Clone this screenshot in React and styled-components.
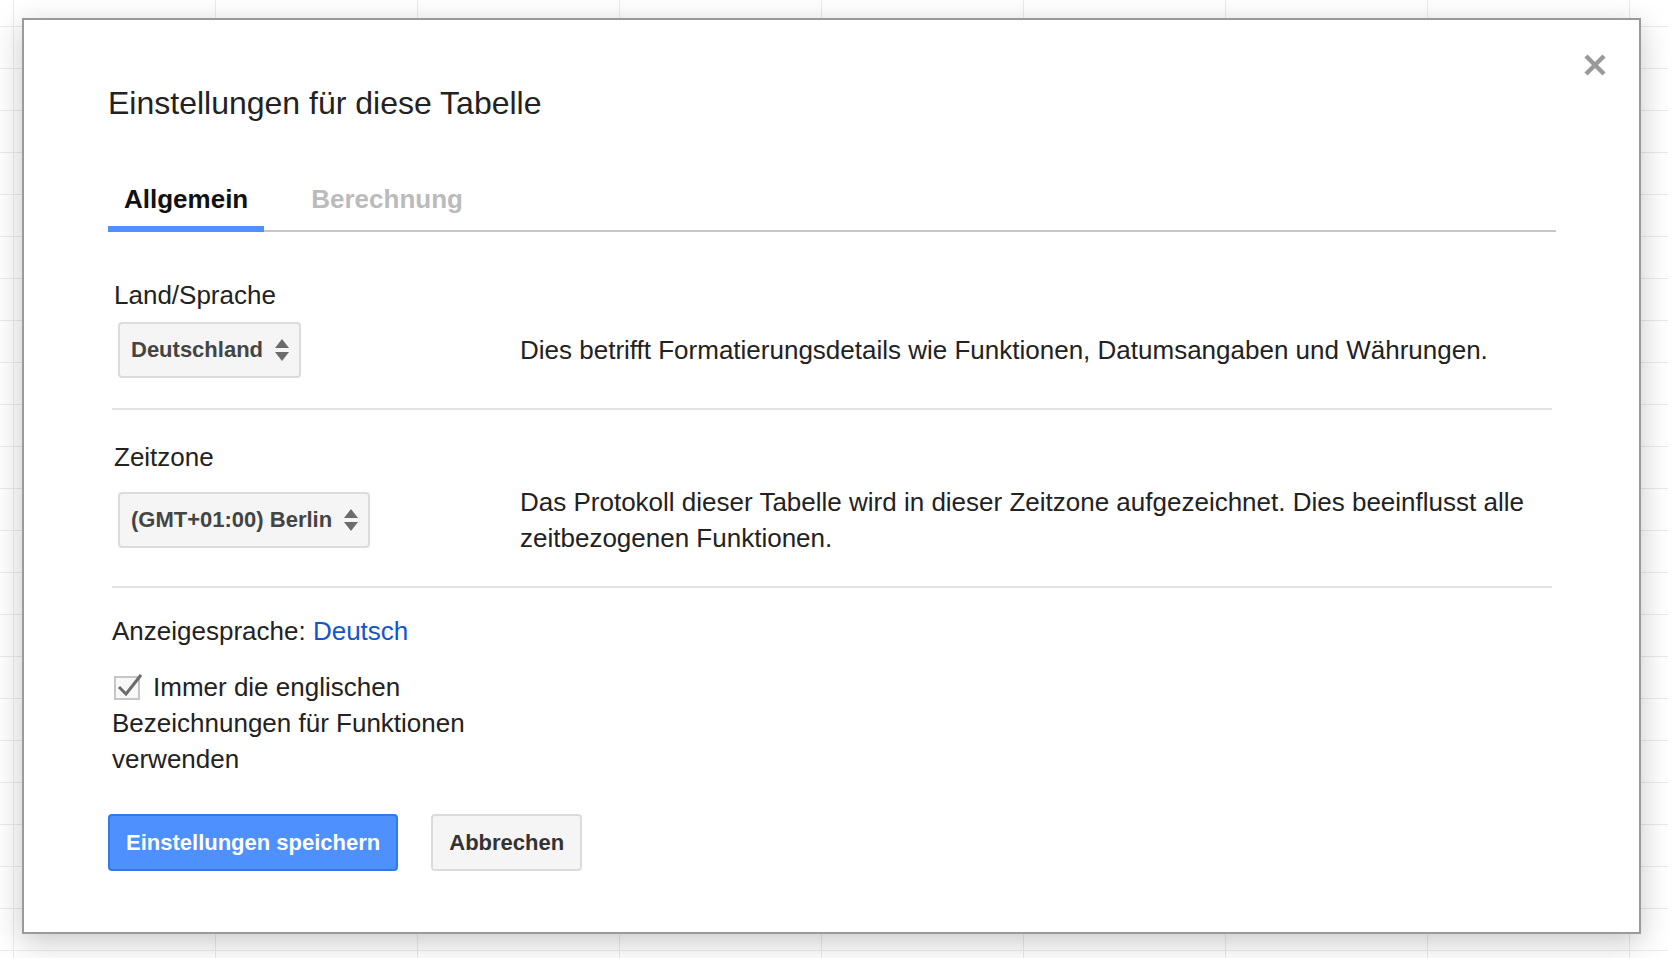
import React, { useState } from 'react';
import styled, { createGlobalStyle } from 'styled-components';

const GlobalStyle = createGlobalStyle`
  html, body {
    margin: 0;
    padding: 0;
    height: 100%;
    overflow: hidden;
  }
  body {
    font-family: "Liberation Sans", Arial, sans-serif;
    color: #222;
    background-color: #fff;
    background-image:
      linear-gradient(to right, #ebebeb 1px, transparent 1px),
      linear-gradient(to bottom, #ebebeb 1px, transparent 1px);
    background-size: 202px 42px;
    background-position: 13px 26px;
  }
`;

const Page = styled.div`
  padding: 18px 0 0 22px;
`;

const Dialog = styled.div`
  box-sizing: border-box;
  width: 1619px;
  background: #fff;
  border: 2px solid #9a9a9a;
  box-shadow: 0 8px 28px rgba(0, 0, 0, 0.22);
  padding: 0 83px 61px 84px;
`;

const Header = styled.div`
  display: flex;
  justify-content: flex-end;
  padding-top: 34px;
  margin-right: -50px;
`;

const Close = styled.button`
  display: flex;
  width: 22px;
  height: 22px;
  padding: 0;
  border: none;
  background: none;
  cursor: pointer;
`;

const Title = styled.h2`
  margin: 7px 0 0;
  font-size: 32px;
  line-height: 40px;
  font-weight: normal;
  color: #222;
`;

const TabBar = styled.div`
  display: flex;
  gap: 31px;
  margin-top: 58px;
  border-bottom: 2px solid #c6c6c6;
`;

const Tab = styled.div`
  padding: 0 16px 9px;
  margin-bottom: -2px;
  font-size: 26px;
  line-height: 36px;
  font-weight: bold;
  color: ${(p) => (p.$active ? '#111' : '#bbb')};
  border-bottom: 6px solid ${(p) => (p.$active ? '#4d90fe' : 'transparent')};
  cursor: pointer;
`;

const Sections = styled.div`
  margin-top: 16px;
  padding: 0 4px;
`;

const Section = styled.div`
  padding: ${(p) => (p.$last ? '25px 0 0' : '29px 0 30px 2px')};
  border-bottom: ${(p) => (p.$last ? 'none' : '2px solid #e3e3e3')};
`;

const Label = styled.div`
  font-size: 26px;
  line-height: 36px;
  margin-bottom: 9px;
`;

const Field = styled.div`
  display: flex;
  align-items: center;
`;

const SelectCol = styled.div`
  width: 402px;
  padding-left: 4px;
  flex-shrink: 0;
`;

const Select = styled.div`
  box-sizing: border-box;
  display: inline-flex;
  align-items: center;
  gap: 12px;
  height: 56px;
  padding: 0 10px 0 11px;
  background: #f5f5f5;
  border: 2px solid #dcdcdc;
  border-radius: 4px;
  font-size: 22px;
  font-weight: bold;
  color: #444;
  cursor: pointer;
`;

const Desc = styled.div`
  flex: 1;
  font-size: 26px;
  line-height: 36px;
`;

const Line = styled.div`
  font-size: 26px;
  line-height: 36px;
`;

const Link = styled.a`
  color: #15c;
  text-decoration: none;
`;

const CheckLine = styled.div`
  width: 400px;
  margin-top: 20px;
  font-size: 26px;
  line-height: 36px;
`;

const CheckBox = styled.svg`
  vertical-align: -4px;
  margin-left: 2px;
  margin-right: 11px;
`;

const Buttons = styled.div`
  display: flex;
  gap: 33px;
  margin-top: 37px;
`;

const Button = styled.button`
  box-sizing: border-box;
  height: 57px;
  padding: 0 16px;
  border-radius: 4px;
  font-family: "Liberation Sans", Arial, sans-serif;
  font-size: 22px;
  font-weight: bold;
  cursor: pointer;
  background: ${(p) => (p.$primary ? '#4d90fe' : '#f5f5f5')};
  border: 2px solid ${(p) => (p.$primary ? '#3079ed' : '#dcdcdc')};
  color: ${(p) => (p.$primary ? '#fff' : '#333')};
`;

function Arrows() {
  return (
    <svg width="14" height="23" viewBox="0 0 14 23">
      <polygon points="7,0 14,9 0,9" fill="#6b6b6b" />
      <polygon points="0,13 14,13 7,22" fill="#6b6b6b" />
    </svg>
  );
}

function CloseIcon() {
  return (
    <svg width="22" height="22" viewBox="0 0 22 22">
      <path d="M2 2 L20 20 M20 2 L2 20" stroke="#999" strokeWidth="4.5" />
    </svg>
  );
}

function App() {
  const [tab, setTab] = useState(0);

  return (
    <Page>
      <GlobalStyle />
      <Dialog>
        <Header>
          <Close aria-label="Schließen"><CloseIcon /></Close>
        </Header>
        <Title>Einstellungen für diese Tabelle</Title>
        <TabBar>
          <Tab $active={tab === 0} onClick={() => setTab(0)}>Allgemein</Tab>
          <Tab $active={tab === 1} onClick={() => setTab(1)}>Berechnung</Tab>
        </TabBar>
        <Sections>
          <Section>
            <Label>Land/Sprache</Label>
            <Field>
              <SelectCol>
                <Select>Deutschland<Arrows /></Select>
              </SelectCol>
              <Desc>Dies betrifft Formatierungsdetails wie Funktionen, Datumsangaben und Währungen.</Desc>
            </Field>
          </Section>
          <Section>
            <Label>Zeitzone</Label>
            <Field>
              <SelectCol>
                <Select>(GMT+01:00) Berlin<Arrows /></Select>
              </SelectCol>
              <Desc>Das Protokoll dieser Tabelle wird in dieser Zeitzone aufgezeichnet. Dies beeinflusst alle zeitbezogenen Funktionen.</Desc>
            </Field>
          </Section>
          <Section $last>
            <Line>Anzeigesprache: <Link href="#">Deutsch</Link></Line>
            <CheckLine>
              <CheckBox width="28" height="28" viewBox="0 0 28 28">
                <rect x="1" y="5" width="24" height="22" fill="#f8f8f8" stroke="#c6c6c6" strokeWidth="2" />
                <path d="M5 15 L12 22 L27 3" fill="none" stroke="#6b6b6b" strokeWidth="3" />
              </CheckBox>Immer die englischen Bezeichnungen für Funktionen verwenden
            </CheckLine>
          </Section>
        </Sections>
        <Buttons>
          <Button $primary>Einstellungen speichern</Button>
          <Button>Abbrechen</Button>
        </Buttons>
      </Dialog>
    </Page>
  );
}

export default App;
